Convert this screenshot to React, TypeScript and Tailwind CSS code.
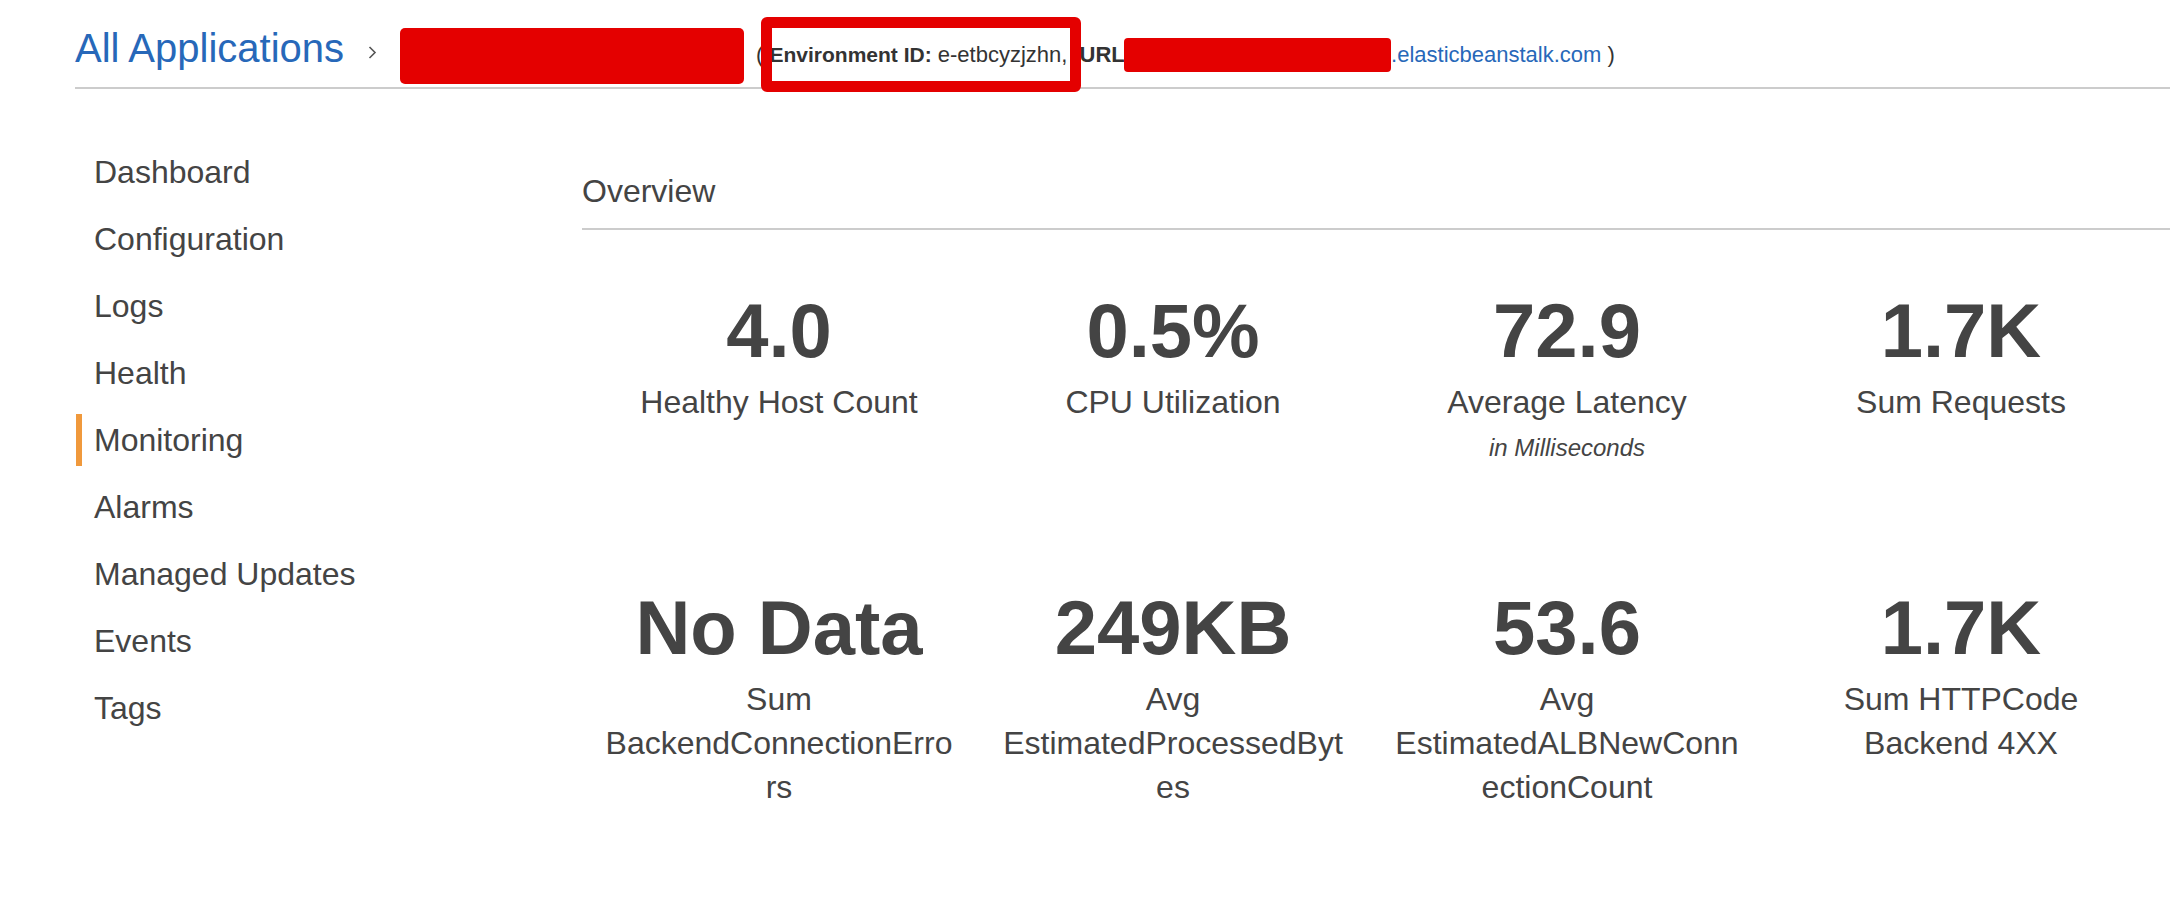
import React from 'react';

interface Metric {
    value: string;
    label: string;
    unit?: string;
}

const navItems = ['Dashboard', 'Configuration', 'Logs', 'Health', 'Monitoring', 'Alarms', 'Managed Updates', 'Events', 'Tags'];

const metrics: Metric[] = [
    { value: '4.0', label: 'Healthy Host Count' },
    { value: '0.5%', label: 'CPU Utilization' },
    { value: '72.9', label: 'Average Latency', unit: 'in Milliseconds' },
    { value: '1.7K', label: 'Sum Requests' },
    { value: 'No Data', label: 'Sum BackendConnectionErrors' },
    { value: '249KB', label: 'Avg EstimatedProcessedBytes' },
    { value: '53.6', label: 'Avg EstimatedALBNewConnectionCount' },
    { value: '1.7K', label: 'Sum HTTPCode Backend 4XX' },
];

const Header = () => {
    return (
        <div className="relative h-[89px] pt-[17px] border-b-2 border-[#cccccc]">
            <div className="flex items-center h-[70px]">
                <a className="text-[40px] leading-[48px] mb-[8px] text-[#2768b9] whitespace-nowrap">All Applications</a>
                <svg width="9" height="13" viewBox="0 0 9 13" className="ml-[24px]">
                    <polyline points="1.5,1 7,6.5 1.5,12" fill="none" stroke="#555" strokeWidth="1.6" />
                </svg>
                {/* redacted environment name */}
                <div className="ml-[23px] mt-[8px] w-[344px] h-[56px] rounded-[5px] bg-[#e40000]" />
                <div className="ml-[12px] mt-[5px] flex items-center text-[22px] leading-[26px] text-[#333] whitespace-nowrap">
                    <span>(&nbsp;</span>
                    <b className="text-[21px]">Environment ID:</b>
                    <span>&nbsp;e-etbcyzjzhn,&nbsp;</span>
                    <b className="ml-[6px]">URL:</b>
                    <div className="ml-[-8px] w-[267px] h-[34px] rounded-[4px] bg-[#e40000]" />
                    <span className="text-[#2768b9]">.elasticbeanstalk.com</span>
                    <span>&nbsp;)</span>
                </div>
            </div>
            {/* highlight drawn over the environment id */}
            <div className="absolute left-[686px] top-[17px] w-[320px] h-[75px] border-[11px] border-[#e40000] rounded-[6px]" />
        </div>
    );
};

const SideNav = ({ active }: { active: string }) => {
    return (
        <div className="w-[507px] pl-px pt-[57px] flex flex-col gap-[15px]">
            {navItems.map((item) => (
                <div
                    key={item}
                    className={`h-[52px] flex items-center pl-[12px] border-l-[6px] text-[32px] text-[#444] ${item === active ? 'border-[#f0993c]' : 'border-transparent'}`}
                >
                    {item}
                </div>
            ))}
        </div>
    );
};

const MetricCell = ({ metric }: { metric: Metric }) => {
    return (
        <div className="flex flex-col items-center text-center px-[21px] text-[#444]">
            <div className="text-[76px] leading-[76px] font-bold whitespace-nowrap">{metric.value}</div>
            <div className="mt-[11px] w-full text-[32px] leading-[44px] [overflow-wrap:break-word]">{metric.label}</div>
            {metric.unit && <div className="text-[24px] leading-[48px] italic">{metric.unit}</div>}
        </div>
    );
};

const App = () => {
    return (
        <div className="min-h-[902px] bg-white pl-[75px] font-['Liberation_Sans','Arial',sans-serif]">
            <Header />
            <div className="flex">
                <SideNav active="Monitoring" />
                <div className="flex-1 pt-[82px]">
                    <div className="text-[32px] leading-[40px] text-[#444] pb-[17px] border-b-2 border-[#cccccc]">Overview</div>
                    <div className="mt-[63px] mr-[12px] grid grid-cols-4 gap-y-[118px]">
                        {metrics.map((m, i) => (
                            <MetricCell key={i} metric={m} />
                        ))}
                    </div>
                </div>
            </div>
        </div>
    );
};

export default App;
